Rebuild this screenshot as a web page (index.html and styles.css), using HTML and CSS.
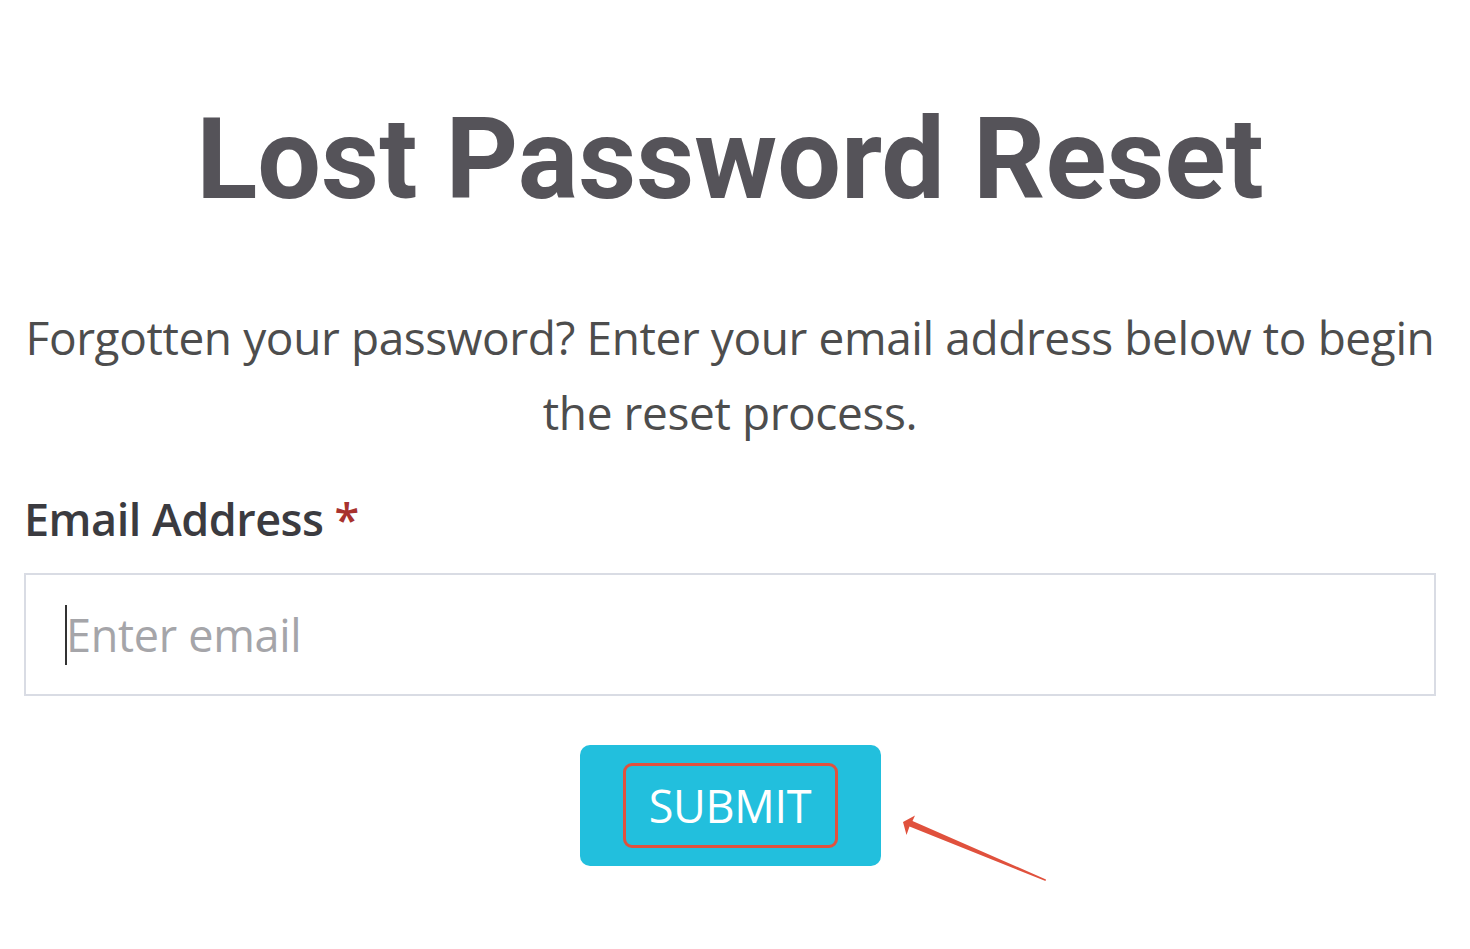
FILE: index.html
```html
<!DOCTYPE html>
<html>
<head>
<meta charset="utf-8">
<link rel="stylesheet" href="styles.css">
</head>
<body>
<main class="page">
  <h1 class="title">Lost Password Reset</h1>
  <p class="intro">Forgotten your password? Enter your email address below to begin the reset process.</p>
  <form class="form">
    <label class="label" for="email">Email Address <span class="req">*</span></label>
    <div class="field">
      <span class="caret"></span>
      <input id="email" class="input" type="text" placeholder="Enter email">
    </div>
    <div class="actions">
      <button type="button" class="btn"><span class="btn-text">SUBMIT</span></button>
      <svg class="arrow" width="180" height="90" viewBox="0 0 180 90">
        <polygon points="9,17 21,10.5 18.5,16 152,74.5 151.5,76 15.5,21.5 12.5,30" fill="#e0513d"/>
      </svg>
    </div>
  </form>
</main>
</body>
</html>
```

FILE: styles.css
```css
* { box-sizing: border-box; }
html, body { margin: 0; padding: 0; background: #ffffff; }
.page {
  width: 1412px;
  margin: 0 auto 0 24px;
  padding-bottom: 83px;
  display: flex;
  flex-direction: column;
}
.title {
  margin: 95px 0 0 0;
  text-align: center;
  font-family: Roboto, "Liberation Sans", sans-serif;
  font-weight: 700;
  font-size: 113px;
  line-height: 130px;
  color: #555359;
  letter-spacing: 0;
}
.intro {
  margin: 75px -4px 0 -4px;
  text-align: center;
  font-family: "Open Sans", sans-serif;
  font-size: 46px;
  letter-spacing: -0.4px;
  line-height: 75px;
  color: #4d4d4d;
}
.form { display: flex; flex-direction: column; margin-top: 39px; }
.label {
  font-family: "Open Sans", sans-serif;
  font-weight: 600;
  font-size: 45px;
  letter-spacing: -0.5px;
  line-height: 60px;
  color: #3b3b40;
}
.req { color: #a8322e; }
.field {
  position: relative;
  margin-top: 24px;
  height: 123px;
  border: 2px solid #d9dce4;
  display: flex;
  align-items: center;
  padding-left: 40px;
}
.caret {
  position: absolute;
  left: 39px;
  top: 30px;
  width: 2px;
  height: 60px;
  background: #333;
}
.input {
  border: none;
  outline: none;
  width: 100%;
  font-family: "Open Sans", sans-serif;
  font-size: 45px;
  letter-spacing: -0.3px;
  color: #333;
  padding: 0;
  background: transparent;
}
.input::placeholder { color: #a5a5a9; }
.actions {
  position: relative;
  display: flex;
  justify-content: center;
  margin-top: 49px;
}
.btn {
  width: 301px;
  height: 121px;
  background: #22bfdd;
  border: none;
  border-radius: 10px;
  display: flex;
  align-items: center;
  justify-content: center;
  padding: 0;
}
.btn-text {
  display: flex;
  align-items: center;
  justify-content: center;
  width: 215px;
  height: 85px;
  border: 3px solid #e0513d;
  border-radius: 9px;
  font-family: "Open Sans", sans-serif;
  font-size: 45px;
  letter-spacing: -0.3px;
  color: #ffffff;
}
.arrow {
  position: absolute;
  left: 870px;
  top: 60px;
}
```
